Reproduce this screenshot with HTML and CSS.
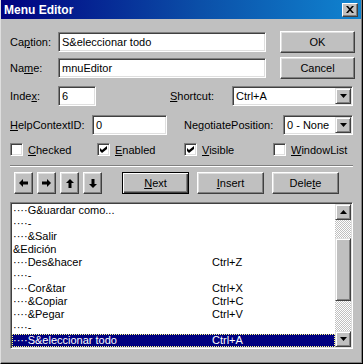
FILE: index.html
```html
<!DOCTYPE html>
<html>
<head>
<meta charset="utf-8">
<link rel="stylesheet" href="styles.css">
</head>
<body>
<div class="window">
  <div class="titlebar">
    <span class="title">Menu Editor</span>
    <span class="close"><svg width="8" height="7" viewBox="0 0 8 7"><path d="M0 0h2l2 2.2L6 0h2L5 3.5 8 7H6L4 4.8 2 7H0l3-3.5z" fill="#000"/></svg></span>
  </div>
  <div class="content">
    <div class="row r1">
      <span class="lbl w48">Ca<u>p</u>tion:</span>
      <div class="field w208">S&amp;eleccionar todo</div>
      <button class="btn bigbtn">OK</button>
    </div>
    <div class="row r2">
      <span class="lbl w48">Na<u>m</u>e:</span>
      <div class="field w208">mnuEditor</div>
      <button class="btn bigbtn">Cancel</button>
    </div>
    <div class="row r3">
      <span class="lbl w48">Inde<u>x</u>:</span>
      <div class="field w38">6</div>
      <span class="lbl shortcut-lbl"><u>S</u>hortcut:</span>
      <div class="field combo w121"><span class="ctext">Ctrl+A</span><span class="dd"><svg width="7" height="4" viewBox="0 0 7 4"><path d="M0 0h7L3.5 4z" fill="#000"/></svg></span></div>
    </div>
    <div class="row r4">
      <span class="lbl w82"><u>H</u>elpContextID:</span>
      <div class="field w75">0</div>
      <span class="lbl negot-lbl">Ne<u>g</u>otiatePosition:</span>
      <div class="field combo w70"><span class="ctext">0 - None</span><span class="dd"><svg width="7" height="4" viewBox="0 0 7 4"><path d="M0 0h7L3.5 4z" fill="#000"/></svg></span></div>
    </div>
    <div class="row r5">
      <label class="chk c1"><span class="box"></span><span><u>C</u>hecked</span></label>
      <label class="chk c2"><span class="box"><svg width="7" height="7" viewBox="0 0 7 7"><path d="M0 2l2 2 5-4v3L2 7 0 5z" fill="#000"/></svg></span><span><u>E</u>nabled</span></label>
      <label class="chk c3"><span class="box"><svg width="7" height="7" viewBox="0 0 7 7"><path d="M0 2l2 2 5-4v3L2 7 0 5z" fill="#000"/></svg></span><span><u>V</u>isible</span></label>
      <label class="chk"><span class="box"></span><span><u>W</u>indowList</span></label>
    </div>
    <div class="sep"></div>
    <div class="row r6">
      <button class="btn arrow"><svg width="9" height="8" viewBox="0 0 9 8"><path d="M0 4 4 0v2.5h5v3H4V8z" fill="#000"/></svg></button>
      <button class="btn arrow"><svg width="9" height="8" viewBox="0 0 9 8"><path d="M9 4 5 0v2.5H0v3h5V8z" fill="#000"/></svg></button>
      <button class="btn arrow"><svg width="8" height="9" viewBox="0 0 8 9"><path d="M4 0 0 4h2.5v5h3V4H8z" fill="#000"/></svg></button>
      <button class="btn arrow"><svg width="8" height="9" viewBox="0 0 8 9"><path d="M4 9 0 5h2.5V0h3v5H8z" fill="#000"/></svg></button>
      <button class="btn midbtn default"><u>N</u>ext</button>
      <button class="btn midbtn"><u>I</u>nsert</button>
      <button class="btn midbtn">Dele<u>t</u>e</button>
    </div>
    <div class="listbox">
      <div class="items">
        <div class="item"><span class="name">····G&amp;uardar como...</span><span class="key"></span></div>
        <div class="item"><span class="name">····-</span><span class="key"></span></div>
        <div class="item"><span class="name">····&amp;Salir</span><span class="key"></span></div>
        <div class="item"><span class="name">&amp;Edición</span><span class="key"></span></div>
        <div class="item"><span class="name">····Des&amp;hacer</span><span class="key">Ctrl+Z</span></div>
        <div class="item"><span class="name">····-</span><span class="key"></span></div>
        <div class="item"><span class="name">····Cor&amp;tar</span><span class="key">Ctrl+X</span></div>
        <div class="item"><span class="name">····&amp;Copiar</span><span class="key">Ctrl+C</span></div>
        <div class="item"><span class="name">····&amp;Pegar</span><span class="key">Ctrl+V</span></div>
        <div class="item"><span class="name">····-</span><span class="key"></span></div>
        <div class="item selected"><span class="name">····S&amp;eleccionar todo</span><span class="key">Ctrl+A</span></div>
      </div>
      <div class="scrollbar">
        <div class="sbtn"><svg width="7" height="4" viewBox="0 0 7 4"><path d="M3.5 0 7 4H0z" fill="#000"/></svg></div>
        <div class="track t1"></div>
        <div class="thumb"></div>
        <div class="track t2"></div>
        <div class="sbtn"><svg width="7" height="4" viewBox="0 0 7 4"><path d="M0 0h7L3.5 4z" fill="#000"/></svg></div>
      </div>
    </div>
  </div>
</div>
</body>
</html>
```

FILE: styles.css
```css
* { box-sizing: border-box; }
html, body { margin: 0; padding: 0; background: #fff; }
body {
  font-family: "Liberation Sans", Arial, sans-serif;
  font-size: 11px;
  color: #000;
}
.window {
  width: 363px;
  height: 364px;
  background: #c0c0c0;
  border-left: 1px solid #dfdfdf;
  border-right: 1px solid #000;
  border-bottom: 1px solid #000;
  box-shadow: inset -1px -1px #808080;
  display: flex;
  flex-direction: column;
}
.titlebar {
  height: 19px;
  margin-right: 1px;
  background: linear-gradient(to right, #000080 0%, #0b4fa8 55%, #1084d0 100%);
  display: flex;
  align-items: center;
  justify-content: space-between;
  padding: 0 3px 0 3px;
}
.title {
  color: #fff;
  font-weight: bold;
  font-size: 12px;
}
.close {
  width: 16px;
  height: 14px;
  background: #c0c0c0;
  border: 1px solid;
  border-color: #fff #404040 #404040 #fff;
  box-shadow: inset -1px -1px #808080;
  display: flex;
  align-items: center;
  justify-content: center;
  padding-bottom: 1px;
}
.content {
  padding-left: 9px;
}
.row {
  display: flex;
  align-items: center;
}
.r1 { margin-top: 12px; height: 22px; }
.r2 { margin-top: 4px; height: 22px; }
.r3 { margin-top: 7px; height: 20px; }
.r4 { margin-top: 9px; height: 20px; }
.r5 { margin-top: 8px; height: 13px; }
.r6 { margin-top: 5px; height: 22px; }
.lbl { white-space: nowrap; }
.w48 { width: 48px; }
.w82 { width: 82px; }
.shortcut-lbl { margin-left: 74px; width: 62px; }
.negot-lbl { margin-left: 17px; width: 99px; }
.field {
  height: 20px;
  background: #fff;
  border: 1px solid;
  border-color: #808080 #fff #fff #808080;
  box-shadow: inset 1px 1px #404040, inset -1px -1px #dfdfdf;
  padding-left: 3px;
  line-height: 18px;
  white-space: nowrap;
  overflow: hidden;
}
.w208 { width: 208px; }
.w38 { width: 38px; }
.w75 { width: 75px; }
.w121 { width: 121px; }
.w70 { width: 70px; }
.combo {
  display: flex;
  align-items: center;
  padding: 1px 1px 1px 3px;
}
.ctext { flex: 1; }
.dd {
  width: 16px;
  height: 16px;
  background: #c0c0c0;
  border: 1px solid;
  border-color: #dfdfdf #404040 #404040 #dfdfdf;
  box-shadow: inset 1px 1px #fff, inset -1px -1px #808080;
  display: flex;
  align-items: center;
  justify-content: center;
}
.btn {
  font-family: inherit;
  font-size: 11px;
  color: #000;
  height: 22px;
  background: #c0c0c0;
  border: 1px solid;
  border-color: #fff #404040 #404040 #fff;
  box-shadow: inset -1px -1px #808080, inset 1px 1px #dfdfdf;
  padding: 0;
  display: flex;
  align-items: center;
  justify-content: center;
}
.bigbtn { width: 75px; margin-left: 14px; }
.chk {
  display: flex;
  align-items: center;
  gap: 5px;
  white-space: nowrap;
}
.c1 { width: 87px; }
.c2 { width: 87px; }
.c3 { width: 89px; }
.box {
  width: 13px;
  height: 13px;
  background: #fff;
  border: 1px solid;
  border-color: #808080 #fff #fff #808080;
  box-shadow: inset 1px 1px #404040, inset -1px -1px #dfdfdf;
  display: flex;
  align-items: center;
  justify-content: center;
  flex: none;
}
.sep {
  margin-top: 9px;
  width: 343px;
  height: 2px;
  border-top: 1px solid #808080;
  border-bottom: 1px solid #fff;
}
.arrow { width: 19px; margin-right: 4px; }
.arrow:first-child { margin-left: 4px; }
.midbtn { width: 67px; margin-right: 8px; }
.default {
  margin-left: 16px;
  border: 1px solid #000;
  box-shadow: inset 1px 1px #fff, inset -1px -1px #404040, inset -2px -2px #808080;
}
.listbox {
  margin-top: 8px;
  width: 343px;
  height: 147px;
  background: #fff;
  border: 1px solid;
  border-color: #808080 #fff #fff #808080;
  box-shadow: inset 1px 1px #404040, inset -1px -1px #dfdfdf;
  padding: 1px;
  display: flex;
}
.items { flex: 1; padding-top: 0; }
.item {
  height: 13px;
  line-height: 13px;
  display: flex;
  padding-left: 1px;
  white-space: nowrap;
}
.item .name { width: 199px; }
.selected {
  background: #000080;
  color: #fff;
  outline: 1px dotted #ffff80;
  outline-offset: -1px;
}
.scrollbar {
  width: 16px;
  display: flex;
  flex-direction: column;
}
.sbtn {
  height: 16px;
  background: #c0c0c0;
  border: 1px solid;
  border-color: #dfdfdf #404040 #404040 #dfdfdf;
  box-shadow: inset 1px 1px #fff, inset -1px -1px #808080;
  display: flex;
  align-items: center;
  justify-content: center;
}
.track {
  background-image: repeating-conic-gradient(#c0c0c0 0 25%, #fff 0 50%);
  background-size: 2px 2px;
}
.t1 { height: 18px; }
.t2 { flex: 1; }
.thumb {
  height: 63px;
  background: #c0c0c0;
  border: 1px solid;
  border-color: #dfdfdf #404040 #404040 #dfdfdf;
  box-shadow: inset 1px 1px #fff, inset -1px -1px #808080;
}
```
